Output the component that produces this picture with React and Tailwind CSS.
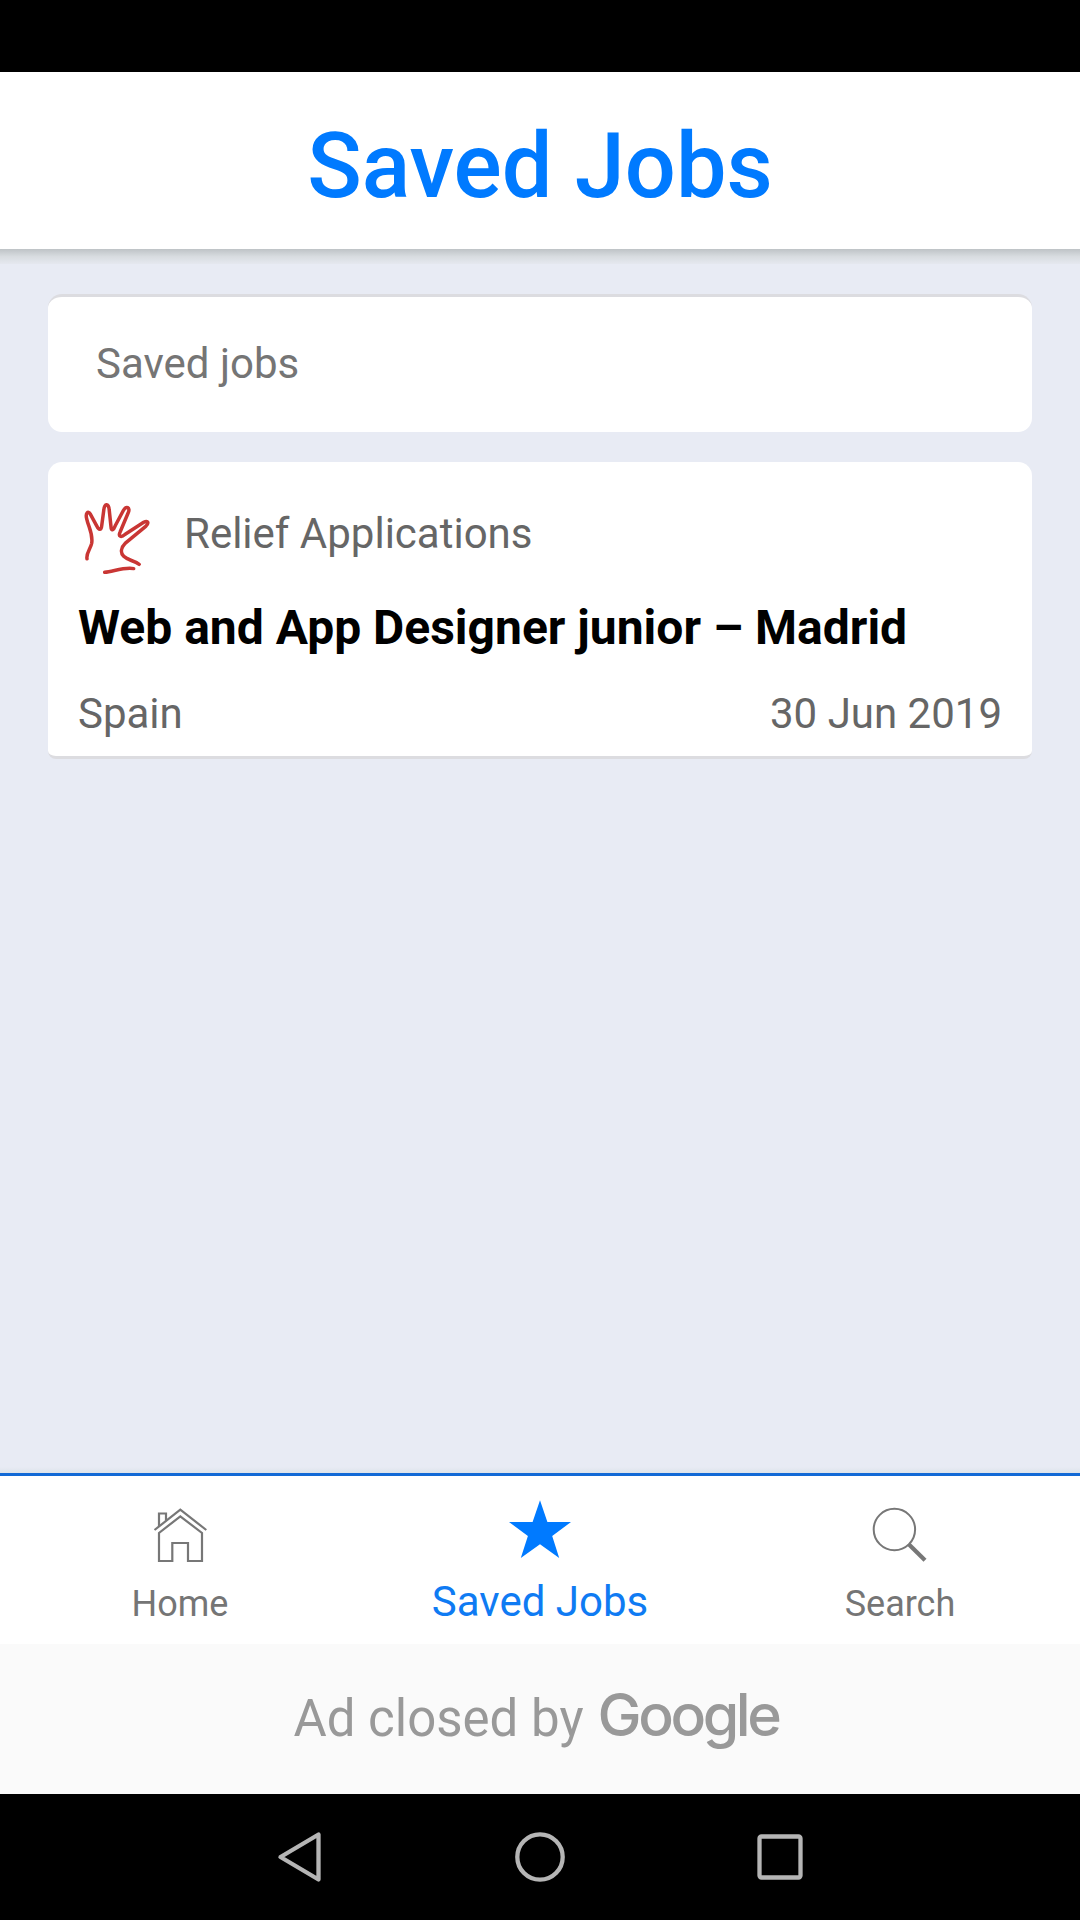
import clsx from 'clsx'

function HandLogo() {
  return (
    <svg className="w-[72px] h-[78px] shrink-0" viewBox="0.3 0.2 72 78" fill="none" stroke="#c93634" strokeWidth="3.5" strokeLinecap="round" strokeLinejoin="round">
      <path d="M9.3 60C8.2 54.500 13 50 14 44.500C15.500 35 11 29 9 20C7.500 14.500 10.500 11.500 12.500 15L19 27C21 31.500 23.500 32 24 27L26 12C26.600 4 31 4 31.500 11L33.300 28C33.600 33 36 31 37.500 27L45.500 12C48.500 6.500 53 8.500 50.500 14L42.500 33C40 38 43.500 39 47.500 35.500L66 23.500C70.500 21 71.500 24.500 68 27.500L48 44C43 49 42.500 54 46 57.500C50 61.500 56 61.500 61.500 65.500" />
      <path d="M27 73.500C36 72.500 47 68 56 69.800" />
    </svg>
  )
}

function HomeIcon() {
  return (
    <svg className="w-[60px] h-[66px]" viewBox="0 0 60 66" fill="none" stroke="#777" strokeWidth="2.200">
      <path d="M4.500 30L30.300 9.700L56.300 30" />
      <path d="M9 26V13.500H16V20.500" />
      <path d="M9 61V33L30.300 16.300L52 33V61H38V43H22.300V61Z" />
    </svg>
  )
}

function StarIcon() {
  return (
    <svg className="w-[64px] h-[66px]" viewBox="0 0 64 66" fill="#007aff">
      <path d="M32 0.300L39.400 22H63L44.200 36L51.200 58L32 44.300L12.800 58L19.900 36L1 22H24.600Z" />
    </svg>
  )
}

function SearchIcon() {
  return (
    <svg className="w-[60px] h-[66px]" viewBox="0 0 60 66" fill="none" stroke="#777">
      <circle cx="24.400" cy="29.500" r="20.700" strokeWidth="2" />
      <path d="M38.500 44L55 60.300" strokeWidth="4.200" />
    </svg>
  )
}

const tabs = [
  { label: 'Home', icon: HomeIcon },
  { label: 'Saved Jobs', icon: StarIcon, active: true },
  { label: 'Search', icon: SearchIcon },
]

function TabBar() {
  return (
    <nav className="flex h-[171px] shrink-0 border-t-3 border-[#1269d6] bg-white">
      {tabs.map(({ label, icon: Icon, active }) => (
        <button key={label} className="flex flex-1 flex-col items-center pt-6">
          <Icon />
          <span
            className={clsx(
              active ? 'text-[42px] leading-[72px] text-[#0f7bf3]' : 'text-[36px] leading-[76px] text-[#757575]'
            )}
          >
            {label}
          </span>
        </button>
      ))}
    </nav>
  )
}

function JobCard({ job }) {
  return (
    <article className="mt-[30px] h-[297px] rounded-t-[14px] rounded-b-[8px] border-b-3 border-[#dcdce0] bg-white px-[30px] pt-[37px] text-[42px] text-[#666]">
      <div className="flex h-[78px] items-start">
        <HandLogo />
        <span className="ml-[34px] leading-[70px]">{job.company}</span>
      </div>
      <h2 className="mt-[21px] text-[48px] leading-[60px] font-bold text-black">{job.title}</h2>
      <div className="mt-[26px] flex justify-between leading-[60px]">
        <span>{job.country}</span>
        <span>{job.date}</span>
      </div>
    </article>
  )
}

function SystemNav() {
  return (
    <div className="flex h-[126px] shrink-0 items-center justify-center gap-[180px] bg-black">
      <svg className="size-[60px]" viewBox="0 0 60 60" fill="none" stroke="#b5b5b5" strokeWidth="4.300" strokeLinejoin="round">
        <path d="M10.500 30L48.500 7.500V52.500Z" />
      </svg>
      <svg className="size-[60px]" viewBox="0 0 60 60" fill="none" stroke="#b5b5b5" strokeWidth="4.300">
        <circle cx="30" cy="30" r="22.700" />
      </svg>
      <svg className="size-[60px]" viewBox="0 0 60 60" fill="none" stroke="#b5b5b5" strokeWidth="4.300">
        <rect x="9.500" y="9.500" width="41" height="41" rx="2" />
      </svg>
    </div>
  )
}

export default function App() {
  const job = {
    company: 'Relief Applications',
    title: 'Web and App Designer junior – Madrid',
    country: 'Spain',
    date: '30 Jun 2019',
  }

  return (
    <div className="flex h-[1920px] w-[1080px] flex-col overflow-hidden bg-[#e8ebf4] font-['Roboto',sans-serif]">
      <div className="h-[72px] shrink-0 bg-black" />
      <header className="h-[177px] shrink-0 bg-white pt-3 text-center">
        <h1 className="text-[90px] leading-[166px] font-medium text-[#007aff]">Saved Jobs</h1>
      </header>
      <div className="h-[15px] shrink-0 bg-linear-to-b from-[#bec3c6] via-[#d8dce0] to-[#e5e8ef]" />

      <main className="flex-1 px-12 pt-[30px]">
        <div className="h-[138px] rounded-[14px] border-t-3 border-[#dcdce0] bg-white px-12 text-[42px] leading-[134px] text-[#757575]">
          Saved jobs
        </div>
        <JobCard job={job} />
      </main>
      <div className="h-1.5 shrink-0 bg-linear-to-b from-[#e8ebf4] to-[#dde3ea]" />

      <TabBar />

      <div className="flex h-[150px] shrink-0 items-baseline justify-center bg-[#fafafa] pr-2 leading-[141px] text-[#999]">
        <span className="text-[51px]">Ad closed by</span>
        <span className="ml-3.5 font-['Inter',sans-serif] text-[59px] font-medium tracking-[-3.4px]">Google</span>
      </div>

      <SystemNav />
    </div>
  )
}
